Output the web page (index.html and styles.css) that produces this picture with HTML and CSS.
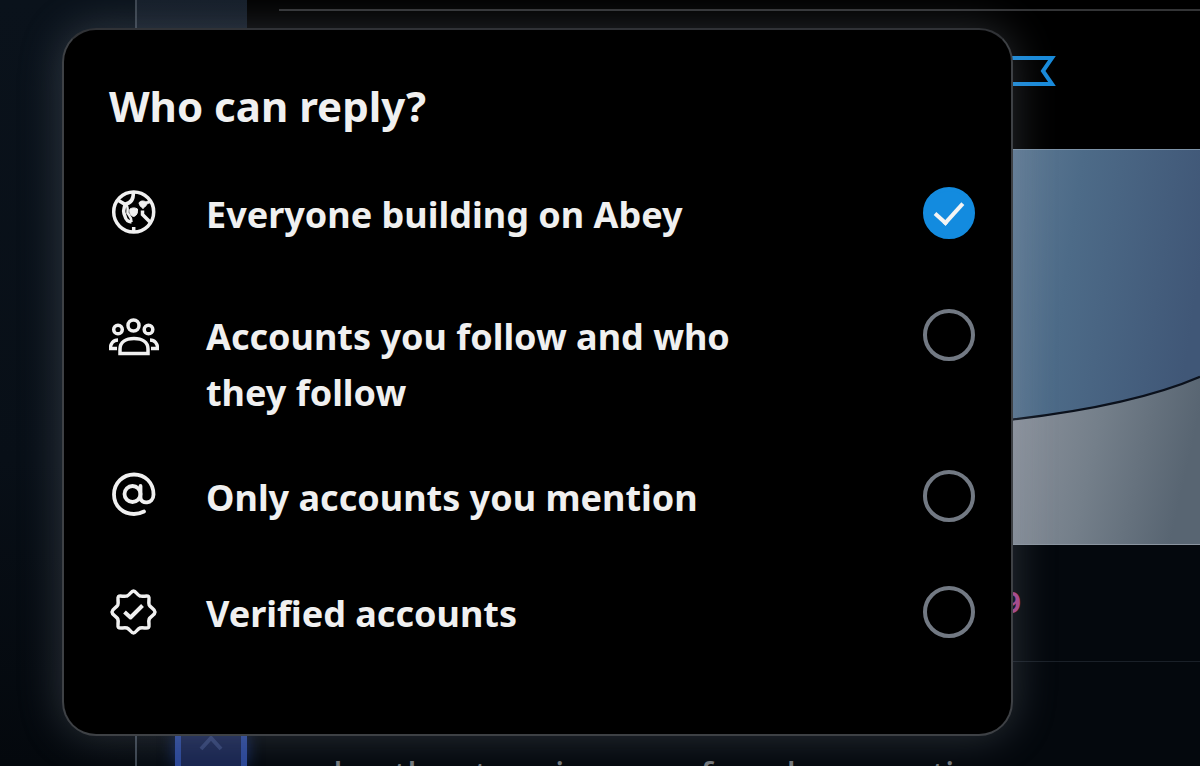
FILE: index.html
```html
<!DOCTYPE html>
<html lang="en">
<head>
<meta charset="utf-8">
<title>Who can reply?</title>
<link rel="stylesheet" href="styles.css">
</head>
<body>
<div class="app">
  <div class="backdrop" aria-hidden="true">
    <div class="side"></div>
    <div class="rail">
      <div class="tile">
        <svg width="24" height="20" viewBox="0 0 24 20"><path d="M2 15 12 4l10 11" fill="none" stroke="#303f70" stroke-width="4"/></svg>
      </div>
    </div>
    <div class="feed">
      <div class="actions">
        <svg width="80" height="30" viewBox="0 0 80 30"><path d="M0 2H72L63 15L72 28H0" fill="none" stroke="#198bdb" stroke-width="4"/></svg>
      </div>
      <svg class="photo" viewBox="0 0 188 396" preserveAspectRatio="none">
        <defs>
          <linearGradient id="sky" x1="0" y1="0" x2="1" y2="0.3"><stop offset="0" stop-color="#5f7a94"/><stop offset=".35" stop-color="#4d6b88"/><stop offset="1" stop-color="#405777"/></linearGradient>
          <linearGradient id="ground" x1="0" y1="0" x2="1" y2="0.2"><stop offset="0" stop-color="#8d939d"/><stop offset=".5" stop-color="#747f8a"/><stop offset="1" stop-color="#586572"/></linearGradient>
        </defs>
        <path d="M0 0H188V396H0Z" fill="url(#sky)"/>
        <path d="M0 271Q121 257 188 228V396H0Z" fill="url(#ground)"/>
        <path d="M0 271Q121 257 188 228" fill="none" stroke="#0b111c" stroke-width="2.2"/>
      </svg>
      <div class="tagline"><span>9</span></div>
      <p class="post">and author tour in case of on documenting</p>
    </div>
  </div>

  <form class="dialog" role="dialog" aria-labelledby="title">
    <h1 class="title" id="title">Who can reply?</h1>

    <label class="option">
      <svg class="icon" viewBox="0 0 50 50" fill="none" stroke="#f0f0f0" stroke-width="3.5">
        <circle cx="24.700" cy="25" r="20"/>
        <path d="M9.500 13.500L16 17.300C20 16.500 24.800 14 24.300 5.500"/>
        <path d="M16 17.500C15.500 21 13.800 23 15 26.500C16.500 29 15.500 34.500 22.500 35"/>
        <path d="M17 18C19.500 19.500 18.500 23 18.500 26C20.500 29 22.500 30 22.500 35" stroke-width="2.500"/>
        <path d="M21 22C23.500 20.500 26 20.500 28.500 22C29 26 27.500 29 24.500 29.500C21 28.500 20 25 21 22Z" fill="#f0f0f0" stroke-width="1"/>
        <path d="M40 13.500L37 15C35 13.500 31 13.500 30 16C30.500 18.500 32 20 34 21.500C36 20 37.500 18 38.500 16.500L42 15.500Z" fill="#f0f0f0" stroke-width="1"/>
        <path d="M33.500 23.500V27.500L41 35M24.700 40V45"/>
      </svg>
      <span class="text">Everyone building on Abey</span>
      <input class="radio" type="radio" name="reply" checked>
    </label>

    <label class="option option-far">
      <svg class="icon" viewBox="0 0 50 50" fill="none" stroke="#f0f0f0" stroke-width="3.5">
        <circle cx="24.500" cy="16.500" r="5.500"/><circle cx="9" cy="20.500" r="4.300"/><circle cx="39.500" cy="20.500" r="4.300"/>
        <path d="M11 44.500V40C11 33 17 29.500 25 29.500S39 33 39 40V44.500Z"/>
        <path d="M9 31C4 31 1.500 35 1.500 39.500H8M41 31C46 31 48.500 35 48.500 39.500H42"/>
      </svg>
      <span class="text">Accounts you follow and who they follow</span>
      <input class="radio" type="radio" name="reply">
    </label>

    <label class="option option-near">
      <svg class="icon" viewBox="0 0 50 50" fill="none" stroke="#f0f0f0" stroke-width="3.8" stroke-linecap="round">
        <circle cx="23.500" cy="24" r="8"/>
        <path d="M31.500 16V27.500C31.500 34.500 44.500 34.500 44.500 24.500C44.500 12.500 36 4.500 25 4.500S5 13 5 24.500S14 44 25 44C29.500 44 32 43 35 41.500"/>
      </svg>
      <span class="text">Only accounts you mention</span>
      <input class="radio" type="radio" name="reply">
    </label>

    <label class="option">
      <svg class="icon" viewBox="0 0 50 50" fill="none" stroke="#f0f0f0" stroke-width="3.5" stroke-linejoin="round">
        <path d="M24.500 5C27 5 28 9 31 10C34 11.200 38 9 39.500 10.500S39 16 40.200 19C41.500 22 46 23 46 26S41.500 30 40.200 33C39 36 41 40 39.500 41.500S34 41 31 42C28 43 27 47 24.500 47S21 43 18 42C15 41 11 43 9.500 41.500S10 36 8.800 33C7.500 30 3 29 3 26S7.500 22 8.800 19C10 16 8 12 9.500 10.500S15 11.200 18 10C21 9 22 5 24.500 5Z"/>
        <path d="M15.500 26L21.500 31.500L33.500 19.500" stroke-width="4"/>
      </svg>
      <span class="text">Verified accounts</span>
      <input class="radio" type="radio" name="reply">
    </label>
  </form>
</div>
</body>
</html>
```
FILE: styles.css
```css
* { box-sizing: border-box; }
body {
  margin: 0;
  background: #04080d;
  color: #f0f0f0;
  font-family: "Noto Sans", "Open Sans", sans-serif;
}
.app {
  position: relative;
  height: 100vh;
  overflow: hidden;
}
.backdrop {
  display: flex;
  height: 100%;
}
.side {
  flex: 0 0 137px;
  border-right: 2px solid #3b444f;
  background: linear-gradient(#0a121b, #080f17 60%, #04080d);
}
.rail {
  flex: 0 0 110px;
  display: flex;
  align-items: flex-end;
  justify-content: flex-end;
  background: linear-gradient(#141d29, #0b1118 20%, #060b11);
}
.tile {
  display: flex;
  justify-content: center;
  width: 72px;
  height: 32px;
  border: solid #2a4696;
  border-width: 0 6px;
  background: #18244f;
  box-shadow: 0 0 16px #142a66;
}
.feed {
  flex: 1;
  min-width: 0;
  display: flex;
  flex-direction: column;
}
.actions {
  flex: none;
  height: 149px;
  padding: 56px 0 0 733px;
  background: linear-gradient(#333436, #333436) 32px 9px / 100% 2px no-repeat #000;
}
.actions svg { display: block; }
.photo {
  display: block;
  flex: none;
  width: calc(100% - 765px);
  height: 396px;
  margin-left: auto;
  border-top: 1px solid #7d93a8;
  border-bottom: 1px solid #8b95a0;
}
.tagline {
  flex: none;
  height: 117px;
  padding: 38px 0 0 756px;
  border-bottom: 1px solid #1a2028;
  color: #a8428a;
  font: bold 28px/40px "Inter", sans-serif;
}
.post {
  flex: none;
  margin: 0;
  padding: 88px 0 0 32px;
  color: #73777c;
  font-size: 35px;
  font-weight: 500;
  line-height: 48px;
  white-space: nowrap;
}
.dialog {
  position: absolute;
  top: 28px;
  left: 62px;
  right: 187px;
  padding: 48px 36px 92px 45px;
  border: 2px solid #3e4145;
  border-top-color: #303236;
  border-radius: 34px;
  background: #000;
  box-shadow: 0 0 44px rgba(150, 160, 175, 0.28);
}
.title {
  margin: 0 0 53px;
  font-size: 42px;
  line-height: 56px;
  font-weight: 700;
}
.option {
  display: flex;
  align-items: flex-start;
  margin-top: 60px;
}
.title + .option { margin-top: 0; }
.option-far { margin-top: 66px; }
.option-near { margin-top: 49px; }
.icon {
  flex: none;
  width: 50px;
  height: 50px;
}
.text {
  flex: 1;
  padding: 0 140px 0 47px;
  font-size: 36px;
  line-height: 56px;
  font-weight: 700;
}
.radio {
  appearance: none;
  flex: none;
  width: 52px;
  height: 52px;
  margin: 0;
  border: 4px solid #727983;
  border-radius: 50%;
}
.radio:checked {
  border-color: #138bdf;
  background: #138bdf;
  display: grid;
  place-items: center;
}
.radio:checked::before {
  content: "";
  width: 12px;
  height: 24px;
  margin-bottom: 6px;
  border: solid #f4f4f4;
  border-width: 0 4px 4px 0;
  transform: rotate(42deg);
}
```
